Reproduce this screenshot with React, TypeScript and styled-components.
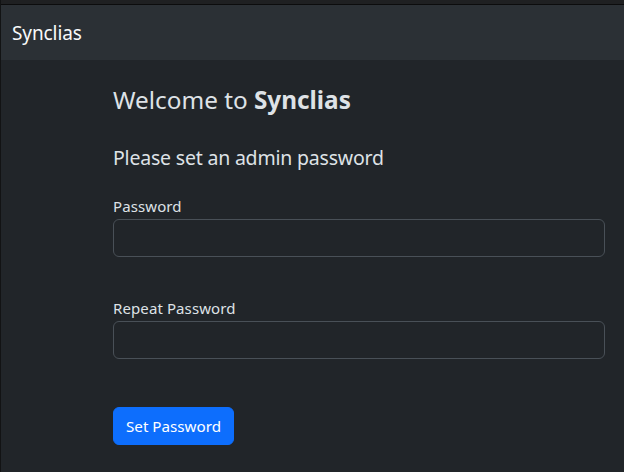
import styled, { createGlobalStyle } from 'styled-components'

const Global = createGlobalStyle`
  html, body { margin:0; padding:0; background:#212529; }
  body { font-family:"Noto Sans","Open Sans",sans-serif; color:#dee2e6; }
  * { box-sizing:border-box; }
`

const Shell = styled.div`min-height:472px;background:#212529;border-left:1px solid #121314;`
const TopStrip = styled.div`height:5px;background:#1f2022;border-bottom:1px solid #0c0c0d;`
const Navbar = styled.nav`height:55px;background:#2b3035;display:flex;align-items:center;padding-left:11px;`
const Brand = styled.span`font-size:19px;color:#f8f9fa;letter-spacing:-0.1px;`
const Main = styled.main`padding:25px 19px 0 112px;`
const Title = styled.h3`margin:0;font-size:24.3px;line-height:1.2;font-weight:400;color:#dee2e6;b{font-weight:700;}`
const Subtitle = styled.h5`margin:32px 0 0;font-size:19.5px;line-height:1.2;font-weight:400;color:#dee2e6;letter-spacing:-0.2px;`
const Field = styled.div<{$gap:number}>`margin-top:${p=>p.$gap}px;display:flex;flex-direction:column;`
const Label = styled.label`font-size:15px;line-height:24px;height:25px;color:#dee2e6;letter-spacing:0.1px;`
const Input = styled.input`height:38px;width:100%;background:#212529;border:1px solid #495057;border-radius:6px;color:#dee2e6;font-size:16px;padding:6px 12px;outline:none;`
const Button = styled.button`margin-top:48px;height:38px;padding:0 12px;background:#0d6efd;border:1px solid #0d6efd;border-radius:6px;color:#fff;font-family:inherit;font-size:15.2px;`

export default function App() {
  return (
    <Shell>
      <Global />
      <TopStrip />
      <Navbar><Brand>Synclias</Brand></Navbar>
      <Main>
        <Title>Welcome to <b>Synclias</b></Title>
        <Subtitle>Please set an admin password</Subtitle>
        <Field $gap={24}>
          <Label>Password</Label>
          <Input type="password" />
        </Field>
        <Field $gap={39}>
          <Label>Repeat Password</Label>
          <Input type="password" />
        </Field>
        <Button>Set Password</Button>
      </Main>
    </Shell>
  )
}
